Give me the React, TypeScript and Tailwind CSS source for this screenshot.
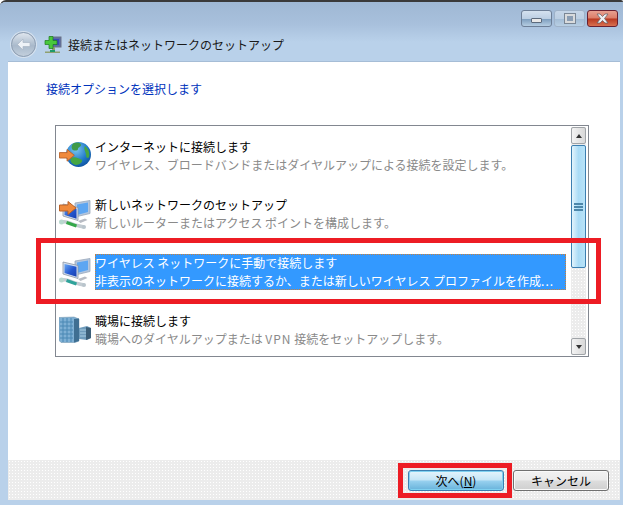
import React from "react";

function Arrow({ x = 0, y = 0, s = 1 }: { x?: number; y?: number; s?: number }) {
  return (
    <path
      transform={`translate(${x} ${y}) scale(${s})`}
      d="M.5 4h8.500V.5L17 7l-8 6.500V10H.5z"
      fill="#f08a3c"
      stroke="#b8622a"
      strokeWidth="1"
    />
  );
}

function Monitors({ id }: { id: string }) {
  return (
    <>
      <defs>
        <linearGradient id={id} x1="0" y1="0" x2="1" y2="1">
          <stop offset="0" stopColor="#6aa8f4" />
          <stop offset=".55" stopColor="#2458d0" />
          <stop offset="1" stopColor="#1a3fb0" />
        </linearGradient>
      </defs>
      <path d="M16 5l15-2.500v13L16 19z" fill="#b4c6de" stroke="#9aa8ba" strokeWidth=".8" />
      <path d="M18 6.500l11-2v9.500l-11 3z" fill="#5da6f2" />
      <path d="M4 6l15 3.500v13L4 18z" fill="#d4dfee" stroke="#8a95a5" strokeWidth=".8" />
      <path d="M5.500 8l12 2.800v10L5.500 17z" fill={`url(#${id})`} />
      <path d="M19 23l7-2.500 2.500 1.500-7 3z" fill="#b8bcc4" />
    </>
  );
}

function Cable({ color }: { color: string }) {
  return (
    <>
      <path d="M1 24q6-1 10 1t14 4" fill="none" stroke="#c3ccd2" strokeWidth="3.500" />
      <path d="M8 23l10 3.500-1 3-10-3.500z" fill={color} />
      <circle cx="2.500" cy="24" r="2.500" fill="#b9d8cf" />
      <circle cx="25" cy="29" r="2" fill="#b9c4cc" />
    </>
  );
}

function GlobeIcon() {
  return (
    <svg width="32" height="32" viewBox="0 0 32 32">
      <defs>
        <radialGradient id="globe" cx=".4" cy=".3" r=".8">
          <stop offset="0" stopColor="#7cc6f0" />
          <stop offset=".6" stopColor="#1f78c8" />
          <stop offset="1" stopColor="#0c4a94" />
        </radialGradient>
      </defs>
      <circle cx="19.500" cy="14.500" r="12.500" fill="url(#globe)" />
      <path d="M15 3c4-1.500 7 0 7 2s-3 2-3 4-5 2-6 0 0-5 2-6z" fill="#3f9a48" />
      <path d="M26 6c4 3 5 8 4 11-1 2-3 1-3-2s-3-6-1-9zM12 18c3-2 8 0 11 2 1 2-3 5-6 5s-7-4-5-7z" fill="#46a642" />
      <Arrow x={0} y={9} s={0.9} />
    </svg>
  );
}

function NetworkIcon() {
  return (
    <svg width="32" height="32" viewBox="0 0 32 32">
      <Monitors id="mon-a" />
      <Cable color="#35a84a" />
      <Arrow x={0} y={3} />
    </svg>
  );
}

function WirelessIcon() {
  return (
    <svg width="32" height="32" viewBox="0 0 32 32">
      <Monitors id="mon-b" />
      <Cable color="#2fa39a" />
    </svg>
  );
}

function BuildingIcon() {
  return (
    <svg width="32" height="32" viewBox="0 0 32 32">
      <path d="M0 3.500l15-.500 5 2v22l-4 1.500H2l-2-2z" fill="#7fb0d4" stroke="#6a8ea8" strokeWidth=".5" />
      <path d="M15 5l5-.500V27l-5 1.500z" fill="#3f6f92" />
      <path d="M1 8h13M1 12h13M1 16h13M1 20h13M1 24h13M4 4v24M8 4v24M12 4v24" stroke="#4a88b4" strokeWidth="1" />
      <path d="M20 14l8-2 4 2v10l-4 2-8-1z" fill="#6f9cbc" />
      <path d="M27 13l5 1v10l-5 2z" fill="#3c5f78" />
      <path d="M21 16h6M21 19h6M21 22h6" stroke="#a9cde2" strokeWidth="1" />
    </svg>
  );
}

function Row({
  icon,
  title,
  sub,
  selected,
}: {
  icon: React.ReactNode;
  title: string;
  sub: React.ReactNode;
  selected?: boolean;
}) {
  return (
    <div className="h-[58px] flex items-center pl-[3px]">
      <div className="w-[32px] h-[32px] shrink-0 mr-[4px]">{icon}</div>
      <div
        className={
          selected
            ? "w-[471px] h-[36px] bg-[#3399ff] text-white outline-1 outline-dotted outline-[#c8803a] -outline-offset-1 leading-[18px] whitespace-nowrap overflow-hidden"
            : "w-[471px] h-[36px] leading-[18px] whitespace-nowrap overflow-hidden"
        }
      >
        <div className={selected ? "text-white" : "text-black"}>{title}</div>
        <div className={selected ? "text-white" : "text-[#8a8a8a]"}>{sub}</div>
      </div>
    </div>
  );
}

function WinButton({ className, children }: { className: string; children: React.ReactNode }) {
  return (
    <div className={`h-[17px] rounded-[3px] border flex items-center justify-center ${className}`}>
      {children}
    </div>
  );
}

export default function App() {
  return (
    <div
      className="relative w-[623px] h-[505px] overflow-hidden flex flex-col rounded-tl-[6px] rounded-tr-[2px] border-t-2 border-[#3a3a3a] bg-[#b9d1ea] text-[12px] text-black"
      style={{ fontFamily: '"Noto Sans CJK JP", "Liberation Sans", sans-serif' }}
    >
      <div className="h-[59px] shrink-0 flex flex-col bg-[linear-gradient(180deg,#9fb8d4_0px,#a8c0dc_22px,#b9d1ea_40px,#b9d1ea_100%)]">
        <div className="h-[17px] mt-[8px] flex justify-end gap-[2px] pr-[5px] shrink-0">
          <WinButton className="w-[31px] border-[#6d7f97] bg-[linear-gradient(180deg,#d4e1ef_0%,#bccfe3_50%,#7f9fbf_55%,#b5cde2_100%)]">
            <div className="w-[11px] h-[5px] mt-[3px] bg-[#e8e8e8] border border-[#5c6a7c] rounded-[1px]" />
          </WinButton>
          <WinButton className="w-[31px] border-[#9fb2c8] bg-[linear-gradient(180deg,#c6d6e8_0%,#bccfe3_50%,#a4bdd6_55%,#b8cfe4_100%)]">
            <div className="w-[10px] h-[9px] border-2 border-[#d8dadc] outline-1 outline-[#7a8694] bg-[#8a9db3]" />
          </WinButton>
          <WinButton className="w-[31px] border-[#6a2030] bg-[linear-gradient(180deg,#e8a090_0%,#dc7d68_48%,#b83820_52%,#d87050_100%)]">
            <svg width="13" height="11" viewBox="0 0 13 11">
              <path d="M1 1h3l2.500 2.500L9 1h3L8.500 5.500 12 10H9L6.500 7.500 4 10H1l3.500-4.500z" fill="#eef0f2" stroke="#5c5c64" strokeWidth=".7" />
            </svg>
          </WinButton>
        </div>
        <div className="flex items-center pl-[11px] mt-[5px]">
          <div className="w-[25px] h-[25px] rounded-full border border-[#8e9db0] bg-[linear-gradient(180deg,#dfe6ee_0%,#a9b9cb_55%,#c2cfdc_100%)] shadow-[0_0_0_1px_#d7e2ee] flex items-center justify-center">
            <svg width="15" height="13" viewBox="0 0 15 13">
              <path d="M7 1L1.500 6.500 7 12V8.500h7v-4H7z" fill="#eef2f7" stroke="#aab6c4" strokeWidth=".7" />
            </svg>
          </div>
          <svg className="ml-[8px]" width="18" height="18" viewBox="0 0 18 18">
            <rect x="6" y="1" width="11" height="10" fill="#5a6aa8" stroke="#6c7486" />
            <rect x="8" y="3" width="7" height="6" fill="#3a48b8" />
            <path d="M8 11h3v3H8zM1 15.500h15v1.500H1z" fill="#8fa070" />
            <path d="M5 0.500h4v4h4v4H9v4H5v-4H1v-4h4z" fill="#48c83c" stroke="#207a20" strokeWidth=".7" />
            <path d="M6 14h5v2H6z" fill="#1e9a6a" />
          </svg>
          <span className="ml-[6px] text-[#1a1a1a] leading-none">接続またはネットワークのセットアップ</span>
        </div>
      </div>

      <div className="flex-1 mr-[3px] ml-[8px] flex flex-col min-h-0 border-t border-[#a6bdd6]">
        <div className="flex-1 bg-white pt-[19px] px-[38px]">
          <div className="text-[#0033bc] leading-[16px]">接続オプションを選択します</div>
          <div className="relative mt-[28px] ml-[9px] w-[534px] h-[232px] border border-[#828790] bg-white flex">
            <div className="w-[515px] pt-[1px]">
              <Row
                icon={<GlobeIcon />}
                title="インターネットに接続します"
                sub="ワイヤレス、ブロードバンドまたはダイヤルアップによる接続を設定します。"
              />
              <Row
                icon={<NetworkIcon />}
                title="新しいネットワークのセットアップ"
                sub="新しいルーターまたはアクセス ポイントを構成します。"
              />
              <Row
                icon={<WirelessIcon />}
                title="ワイヤレス ネットワークに手動で接続します"
                sub={
                  <>
                    非表示のネットワークに接続するか、または新しいワイヤレス プロファイルを作成
                    <span className="tracking-[1px]">...</span>
                  </>
                }
                selected
              />
              <Row
                icon={<BuildingIcon />}
                title="職場に接続します"
                sub={
                  <>
                    職場へのダイヤルアップまたは <span className="tracking-[1px]">VPN</span> 接続をセットアップします。
                  </>
                }
              />
            </div>
            <div className="w-[15px] my-[1px] flex flex-col bg-[#ececec] bg-[radial-gradient(#ffffff_0.7px,transparent_0.7px)] bg-[length:3px_3px]">
              <div className="h-[17px] shrink-0 border border-[#a0a4a8] rounded-[2px] bg-[linear-gradient(90deg,#f4f4f4,#d8d8d8)] flex items-center justify-center">
                <div className="w-0 h-0 border-x-[3px] border-x-transparent border-b-[4px] border-b-[#333]" />
              </div>
              <div className="h-[123px] shrink-0 mt-[1px] border border-[#3c7fb1] rounded-[2px] bg-[linear-gradient(90deg,#e3f4fc,#a9dbf6_50%,#b9e3f8)] flex items-center justify-center">
                <div className="w-[9px] h-[8px] border-y-2 border-[#4d87aa] bg-[linear-gradient(180deg,transparent_1px,#4d87aa_1px,#4d87aa_3px,transparent_3px)]" />
              </div>
              <div className="flex-1" />
              <div className="h-[17px] shrink-0 border border-[#a0a4a8] rounded-[2px] bg-[linear-gradient(90deg,#f4f4f4,#d8d8d8)] flex items-center justify-center">
                <div className="w-0 h-0 border-x-[3px] border-x-transparent border-t-[4px] border-t-[#333]" />
              </div>
            </div>
          </div>
        </div>
        <div className="h-[40px] shrink-0 bg-[#ececec] bg-[radial-gradient(#ffffff_0.7px,transparent_0.7px)] bg-[length:3px_3px] flex items-start justify-end pt-[10px] pr-[11px] gap-[9px]">
          <button className="w-[96px] h-[21px] rounded-[3px] border border-[#3c7fb1] bg-[linear-gradient(180deg,#e5f4fc_0%,#c4e5f6_48%,#98d1ef_52%,#68b3db_100%)] shadow-[inset_0_0_0_1px_#7fd0f0] leading-none text-black">
            次へ(<span className="underline">N</span>)
          </button>
          <button className="w-[96px] h-[21px] rounded-[3px] border border-[#707070] bg-[linear-gradient(180deg,#f2f2f2_0%,#ebebeb_48%,#dddddd_52%,#cfcfcf_100%)] shadow-[inset_0_0_0_1px_#fafafa] leading-none text-black">
            キャンセル
          </button>
        </div>
      </div>
      <div className="h-[5px] shrink-0" />

      <div className="absolute left-[36px] top-[236px] w-[565px] h-[66px] border-[5px] border-[#ed1c24]" />
      <div className="absolute left-[398px] top-[461px] w-[114px] h-[35px] border-[5px] border-[#ed1c24]" />
    </div>
  );
}
